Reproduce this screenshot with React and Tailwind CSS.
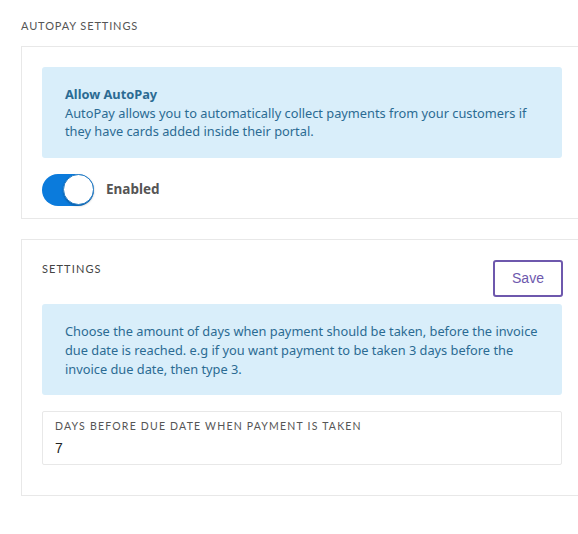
import React, { useState } from 'react';

const heading = { fontFamily: '"Lato", "DejaVu Sans", sans-serif' };
const body = { fontFamily: '"Noto Sans", "Open Sans", sans-serif' };

const App = () => {
    const [enabled, setEnabled] = useState(true);
    const [days, setDays] = useState('7');

    return (
        <div className="w-[578px] h-[534px] overflow-hidden bg-white">
            <div className="w-[583px] pl-[21px] pt-[19px]">
                {/* Section title */}
                <h2 className="text-[11px] tracking-[0.08em] text-[#555] uppercase leading-[13px]" style={heading}>
                    AutoPay Settings
                </h2>

                {/* AutoPay card */}
                <div className="mt-[14px] border border-[#e8e8e8] px-[20px] pt-[20px] pb-[12px]">
                    <div className="bg-[#d9eefa] rounded-[3px] px-[23px] pt-[18px] pb-[17px] text-[#2b6b93] text-[12.8px] leading-[18.5px]" style={body}>
                        <p className="font-bold">Allow AutoPay</p>
                        <p>AutoPay allows you to automatically collect payments from your customers if they have cards added inside their portal.</p>
                    </div>

                    <div className="mt-[16px] flex items-center gap-[12px]">
                        <button
                            onClick={() => setEnabled(!enabled)}
                            className={`w-[52px] h-[32px] rounded-full flex items-center ${enabled ? 'bg-[#0b7bdc] justify-end' : 'bg-[#ccc] justify-start'}`}
                        >
                            <span className="w-[31px] h-[31px] rounded-full bg-white border border-[#2a7fc6] shadow-[0_1px_2px_rgba(0,0,0,0.25)]" />
                        </button>
                        <span className="text-[13.5px] font-bold text-[#555]" style={body}>
                            {enabled ? 'Enabled' : 'Disabled'}
                        </span>
                    </div>
                </div>

                {/* Settings card */}
                <div className="mt-[20px] border border-[#e8e8e8] px-[20px] pt-[20px] pb-[30px]">
                    <div className="flex justify-between items-start">
                        <h3 className="mt-[1px] text-[11px] tracking-[0.1em] text-[#444] uppercase" style={heading}>
                            Settings
                        </h3>
                        <button className="mr-[-1px] w-[70px] h-[37px] border-2 border-[#6e58ad] rounded-[3px] text-[#6e58ad] text-[14px]" style={{ fontFamily: '"Liberation Sans", Arial, sans-serif' }}>
                            Save
                        </button>
                    </div>

                    <div className="mt-[7px] bg-[#d9eefa] rounded-[3px] px-[23px] pt-[18px] pb-[16px] text-[#2b6b93] text-[12.8px] leading-[19px]" style={body}>
                        Choose the amount of days when payment should be taken, before the invoice due date is reached. e.g if you want payment to be taken 3 days before the invoice due date, then type 3.
                    </div>

                    <div className="mt-[16px] border border-[#e8e8e8] rounded-[2px] px-[12px] pt-[8px] pb-[5px]">
                        <label className="block text-[10.5px] tracking-[0.115em] text-[#555] uppercase leading-[13px]" style={heading}>
                            Days before due date when payment is taken
                        </label>
                        <input
                            value={days}
                            onChange={(e) => setDays(e.target.value)}
                            className="w-full mt-[5px] text-[14px] text-[#222] outline-none bg-transparent leading-[20px]"
                            style={{ fontFamily: '"Liberation Sans", Arial, sans-serif' }}
                        />
                    </div>
                </div>
            </div>
        </div>
    );
};

export default App;
